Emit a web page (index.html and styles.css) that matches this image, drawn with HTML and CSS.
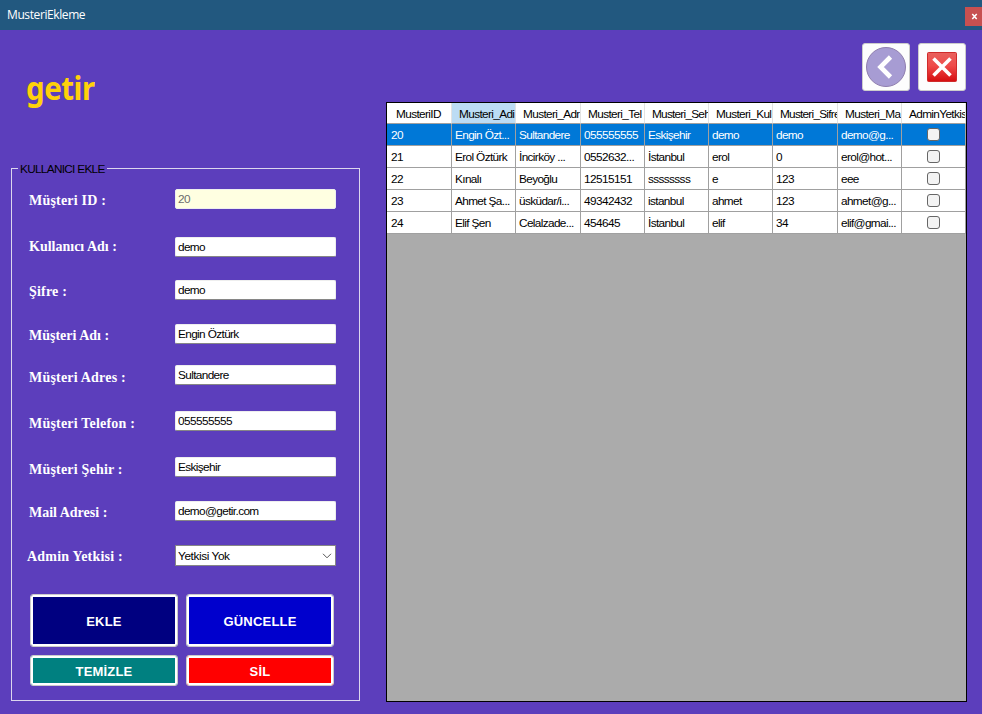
FILE: index.html
```html
<!DOCTYPE html>
<html lang="tr">
<head>
<meta charset="utf-8">
<title>MusteriEkleme</title>
<link rel="stylesheet" href="styles.css">
</head>
<body>
<header class="titlebar">
  <span class="title">MusteriEkleme</span>
  <button class="close" aria-label="Kapat"><svg width="7" height="7" viewBox="0 0 7 7"><path d="M1.300 1L5.700 6M5.700 1L1.300 6" stroke="#fff" stroke-width="1.500"/></svg></button>
</header>
<main class="window">
  <section class="left">
    <div class="logo"><span>getir</span></div>
    <fieldset class="group">
      <legend>KULLANICI EKLE</legend>
      <div class="fields">
        <label class="d1">Müşteri ID :</label><div class="input disabled num">20</div>
        <label class="up tight">Kullanıcı Adı :</label><div class="input mid">demo</div>
        <label class="d1">Şifre :</label><div class="input">demo</div>
        <label class="d1 tight">Müşteri Adı :</label><div class="input">Engin Öztürk</div>
        <label class="d2">Müşteri Adres :</label><div class="input">Sultandere</div>
        <label class="d2">Müşteri Telefon :</label><div class="input num">055555555</div>
        <label class="d2">Müşteri Şehir :</label><div class="input">Eskişehir</div>
        <label class="d1 tight">Mail Adresi :</label><div class="input">demo@getir.com</div>
        <label class="d1 out">Admin Yetkisi :</label><div class="input combo"><span>Yetkisi Yok</span><svg width="10" height="6" viewBox="0 0 10 6"><path d="M1 .8L5 4.8L9 .8" fill="none" stroke="#555"/></svg></div>
      </div>
      <div class="actions">
        <button class="navy">EKLE</button><button class="blue">GÜNCELLE</button>
        <button class="teal">TEMİZLE</button><button class="red">SİL</button>
      </div>
    </fieldset>
  </section>
  <section class="right">
    <nav class="tools">
      <button aria-label="Geri"><svg width="42" height="42" viewBox="0 0 42 42"><circle cx="21" cy="21" r="19.5" fill="#a79cd3" stroke="#8f7eae"/><path d="M25.500 11L15.500 21L25.500 31" fill="none" stroke="#fff" stroke-width="4.6"/></svg></button>
      <button aria-label="Çıkış"><svg width="42" height="42" viewBox="0 0 42 42"><defs><linearGradient id="r" x2="0" y2="1"><stop offset="0" stop-color="#e8615d"/><stop offset=".45" stop-color="#ef4b4a"/><stop offset="1" stop-color="#d60d10"/></linearGradient></defs><rect x="6.5" y="6.500" width="29" height="29" rx="1" fill="url(#r)" stroke="#cf2b2b"/><path d="M12.500 12.500L29.500 29.500M29.500 12.500L12.500 29.500" stroke="#fff" stroke-width="3.6"/></svg></button>
    </nav>
    <div class="grid">
      <table>
        <colgroup><col class="w65"><col><col class="w65"><col><col><col><col class="w65"><col><col></colgroup>
        <thead><tr><th class="first">MusteriID</th><th class="sorted">Musteri_Adi</th><th>Musteri_Adr</th><th>Musteri_Tel</th><th class="snug">Musteri_Seh</th><th>Musteri_Kul</th><th class="snug">Musteri_Sifre</th><th>Musteri_Ma</th><th>AdminYetkis</th></tr></thead>
        <tbody>
          <tr class="selected"><td class="num">20</td><td>Engin Özt...</td><td>Sultandere</td><td class="num">055555555</td><td>Eskişehir</td><td>demo</td><td>demo</td><td>demo@g...</td><td class="chk"><i></i></td></tr>
          <tr><td class="num">21</td><td>Erol Öztürk</td><td>İncirköy ...</td><td class="num">0552632...</td><td>İstanbul</td><td>erol</td><td class="num">0</td><td>erol@hot...</td><td class="chk"><i></i></td></tr>
          <tr><td class="num">22</td><td>Kınalı</td><td>Beyoğlu</td><td class="num">12515151</td><td>ssssssss</td><td>e</td><td class="num">123</td><td>eee</td><td class="chk"><i></i></td></tr>
          <tr><td class="num">23</td><td>Ahmet Şa...</td><td>üsküdar/i...</td><td class="num">49342432</td><td>istanbul</td><td>ahmet</td><td class="num">123</td><td>ahmet@g...</td><td class="chk"><i></i></td></tr>
          <tr><td class="num">24</td><td>Elif Şen</td><td>Celalzade...</td><td class="num">454645</td><td>İstanbul</td><td>elif</td><td class="num">34</td><td>elif@gmai...</td><td class="chk"><i></i></td></tr>
        </tbody>
      </table>
    </div>
  </section>
</main>
</body>
</html>
```
FILE: styles.css
```css
* { box-sizing: border-box; }
body {
  margin: 0;
  width: 982px;
  height: 714px;
  overflow: hidden;
  background: #5c3ebc;
  font-family: "Liberation Sans", sans-serif;
  font-size: 11.8px;
  letter-spacing: -0.63px;
  color: #000;
}
button { margin: 0; padding: 0; font-family: inherit; }
.num { letter-spacing: -0.56px; }
.titlebar {
  height: 30px;
  background: #22587f;
  display: flex;
  justify-content: space-between;
  align-items: flex-start;
}
.title {
  padding-left: 7px;
  font: 12px/30px "Open Sans", sans-serif;
  letter-spacing: -0.4px;
  color: #fff;
}
.close {
  width: 17px;
  height: 19px;
  margin-top: 7px;
  border: 0;
  background: #c75050;
  display: flex;
  align-items: center;
  justify-content: center;
  padding-left: 2px;
}
.window { height: 684px; display: flex; }
.left { width: 386px; }
.logo { height: 131px; padding: 36px 0 0 26px; }
.logo span {
  display: inline-block;
  transform: scaleX(0.92);
  transform-origin: left;
  font: 700 32px/44px "Noto Sans", sans-serif;
  letter-spacing: -0.5px;
  color: #ffd10a;
}
.group {
  margin: 0 0 0 11px;
  padding: 0;
  width: 349px;
  height: 540px;
  border: 1px solid #dcd6ee;
  min-width: 0;
}
legend {
  margin-left: 6px;
  padding: 0 2px;
  height: 14px;
  line-height: 16px;
  letter-spacing: -0.7px;
}
.fields {
  display: grid;
  grid-template-columns: 146px 161px;
  grid-template-rows: 48px 43px 44px 41px 46px 46px 44px 44px 49px;
  align-items: start;
  padding: 14px 0 0 17px;
}
label {
  font: 700 14px/22px "Liberation Serif", serif;
  letter-spacing: 0.2px;
  color: #fff;
}
.d1 { padding-top: 1px; }
.d2 { padding-top: 2px; }
.up { margin-top: -1px; }
.tight { letter-spacing: 0; }
.out { margin-left: -2px; }
.input {
  height: 20px;
  padding-left: 2px;
  line-height: 18px;
  border: 1px solid #eee;
  border-bottom-color: #868686;
  border-radius: 2px;
  background: #fff;
}
.mid { line-height: 19px; }
.disabled { background: #ffffe1; color: #6d6d6d; border-bottom-color: #eee; }
.combo {
  height: 21px;
  border: 1px solid #868686;
  border-radius: 0;
  display: flex;
  justify-content: space-between;
  align-items: center;
  padding-right: 3px;
  letter-spacing: -0.4px;
}
.actions {
  display: grid;
  grid-template-columns: 148px 148px;
  grid-template-rows: 53px 31px;
  gap: 8px;
  padding-left: 18px;
}
.actions button {
  padding-top: 2px;
  border: 1px solid #ccc;
  border-radius: 3px;
  box-shadow: inset 0 0 0 2px #fff;
  color: #fff;
  font-size: 13px;
  font-weight: 700;
  letter-spacing: 0.2px;
}
.actions .navy { background: #000080; }
.actions .blue { background: #0000cd; }
.actions .teal { background: #008080; }
.actions .red { background: #f00; }
.right { width: 581px; }
.tools {
  height: 72px;
  padding-top: 13px;
  display: flex;
  justify-content: flex-end;
  gap: 8px;
  padding-right: 1px;
}
.tools button {
  width: 48px;
  height: 48px;
  border: 1px solid #ccc;
  border-radius: 3px;
  background: #fdfdfd;
  display: flex;
  align-items: center;
  justify-content: center;
}
.grid { height: 600px; border: 1px solid #000; background: #ababab; }
table { width: 579px; table-layout: fixed; border-collapse: separate; border-spacing: 0; }
col { width: 64px; }
.w65 { width: 65px; }
th, td { padding: 0; text-align: left; white-space: nowrap; overflow: hidden; }
th {
  height: 21px;
  line-height: 18px;
  padding: 2px 0 0 7px;
  background: #fff;
  border-right: 1px solid #e2e2e2;
  border-bottom: 1px solid #a0a0a0;
  font-weight: 400;
  letter-spacing: -0.63px;
}
.snug { letter-spacing: -0.75px; }
.first { padding-left: 9px; }
.sorted { background: #bcdcf4; }
td {
  height: 22px;
  line-height: 19px;
  padding: 2px 0 0 3px;
  background: #fff;
  border-right: 1px solid #a0a0a0;
  border-bottom: 1px solid #a0a0a0;
}
.selected td { background: #0078d7; color: #fff; }
td:first-child { padding-left: 4px; }
td.chk { padding: 0; }
.chk i {
  display: block;
  width: 13px;
  height: 13px;
  margin: 0 auto;
  border: 1px solid #666;
  border-radius: 3px;
  background: #f3f3f3;
}
```
